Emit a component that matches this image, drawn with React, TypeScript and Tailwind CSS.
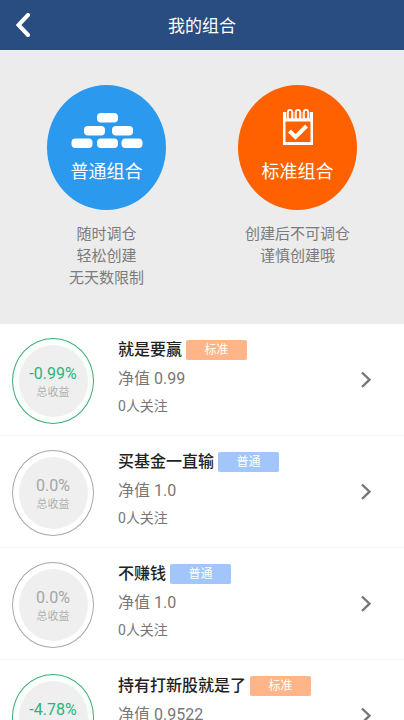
import { clsx } from 'clsx';

type Kind = 'standard' | 'normal';

interface Portfolio {
  name: string;
  kind: Kind;
  profit: string;
  netValue: string;
  followers: number;
}

const portfolios: Portfolio[] = [
  { name: '就是要赢', kind: 'standard', profit: '-0.99%', netValue: '0.99', followers: 0 },
  { name: '买基金一直输', kind: 'normal', profit: '0.0%', netValue: '1.0', followers: 0 },
  { name: '不赚钱', kind: 'normal', profit: '0.0%', netValue: '1.0', followers: 0 },
  { name: '持有打新股就是了', kind: 'standard', profit: '-4.78%', netValue: '0.9522', followers: 0 },
];

function BricksIcon() {
  return (
    <svg className="h-9 w-[72px]" viewBox="0 0 72 36" fill="white" aria-hidden="true">
      <rect x="26" y="0" width="21" height="9.5" rx="4" />
      <rect x="13" y="13" width="21" height="9.5" rx="4" />
      <rect x="41" y="13" width="21" height="9.5" rx="4" />
      <rect x="0.5" y="25.5" width="21" height="9.5" rx="4" />
      <rect x="26" y="25.5" width="21" height="9.5" rx="4" />
      <rect x="50.5" y="25.5" width="21" height="9.5" rx="4" />
    </svg>
  );
}

function CalendarIcon() {
  return (
    <svg className="h-9 w-[30px]" viewBox="0 0 30 36" fill="none" aria-hidden="true">
      <path d="M0 3h30v33H0z" fill="white" />
      <path d="M2.5 12.5h25v20.5h-25z" fill="#ff6000" />
      {/* Binding rings */}
      {[7, 15, 23].map((x) => (
        <g key={x}>
          <rect x={x - 3} y="0" width="6" height="11" rx="3" fill="white" />
          <rect x={x - 1.2} y="1.8" width="2.4" height="7.4" rx="1.2" fill="#ff6000" />
          <path d={`M${x - 3.4} 2v7.5M${x + 3.4} 2v7.5`} stroke="#ff6000" strokeWidth="0.7" />
        </g>
      ))}
      <path d="M6.5 22l6 6L23.5 17" stroke="white" strokeWidth="4" />
    </svg>
  );
}

interface CreateOptionProps {
  kind: Kind;
  label: string;
  lines: string[];
}

function CreateOption({ kind, label, lines }: CreateOptionProps) {
  return (
    <div className="flex flex-col items-center">
      <button
        type="button"
        className={clsx(
          'flex h-[125px] w-[119px] flex-col items-center rounded-[50%] text-lg leading-6 text-white',
          kind === 'normal' ? 'bg-[#2b99ed] pt-7' : 'bg-[#ff6000] pt-6'
        )}
      >
        {kind === 'normal' ? <BricksIcon /> : <CalendarIcon />}
        <span className={kind === 'normal' ? 'mt-[11px]' : 'mt-[15px]'}>{label}</span>
      </button>
      <p className="mt-[13px] text-center text-[15px] leading-[22px] text-[#7b7b7b]">
        {lines.map((line) => (
          <span key={line} className="block whitespace-nowrap">{line}</span>
        ))}
      </p>
    </div>
  );
}

function ProfitRing({ profit }: { profit: string }) {
  const down = profit.startsWith('-');

  return (
    <div
      className={clsx(
        'flex h-[86px] w-[82px] shrink-0 items-center justify-center rounded-[50%] border',
        down ? 'border-[#43ac78] bg-[#f9fffb]' : 'border-[#a8a8a8] bg-white'
      )}
    >
      <div className="flex h-[72px] w-[69px] flex-col items-center rounded-[50%] bg-[#efefef] pt-[19px]">
        <span className={clsx('text-base leading-5', down ? 'text-[#2bb37c]' : 'text-[#a5a5a5]')}>
          {profit}
        </span>
        <span className="text-[11px] leading-[18px] text-[#b0b0b0]">总收益</span>
      </div>
    </div>
  );
}

function PortfolioRow({ item }: { item: Portfolio }) {
  return (
    <li className="border-b border-[#f5f5f5]">
      <a href="#" className="flex h-[111px] items-start pr-8 pl-3">
        <div className="pt-3.5">
          <ProfitRing profit={item.profit} />
        </div>
        <div className="ml-6 min-w-0 flex-1 pt-3.5">
          <div className="flex items-center gap-1">
            <h2 className="text-base leading-6 font-medium whitespace-nowrap text-[#222]">{item.name}</h2>
            <span
              className={clsx(
                'h-5 w-[61px] shrink-0 rounded-xs text-center text-xs leading-5 text-white',
                item.kind === 'standard' ? 'bg-[#ffb587]' : 'bg-[#a2c6fc]'
              )}
            >
              {item.kind === 'standard' ? '标准' : '普通'}
            </span>
          </div>
          <p className="mt-[5px] text-base leading-6 text-[#777]">净值 {item.netValue}</p>
          <p className="mt-[3px] text-sm leading-6 text-[#777]">{item.followers}人关注</p>
        </div>
        <svg className="mt-[47px] h-[18px] w-3 shrink-0" viewBox="0 0 12 18" fill="none" aria-hidden="true">
          <path d="M2 1.5l7.5 7.2L2 16" stroke="#777" strokeWidth="2.4" />
        </svg>
      </a>
    </li>
  );
}

export default function App() {
  return (
    <div className="flex h-screen flex-col overflow-hidden bg-white font-['Roboto','Noto_Sans_CJK_SC',sans-serif]">
      <header className="grid h-[50px] shrink-0 grid-cols-[56px_1fr_56px] items-center bg-[#294d80] text-white">
        <button type="button" aria-label="返回" className="flex h-full items-center pl-4">
          <svg className="h-6 w-3.5" viewBox="0 0 14 24" fill="none" aria-hidden="true">
            <path d="M12 2L2.5 12L12 22" stroke="white" strokeWidth="4" strokeLinecap="round" />
          </svg>
        </button>
        <h1 className="pt-0.5 text-center text-[17px] leading-6">我的组合</h1>
      </header>

      <section className="grid h-[274px] shrink-0 grid-cols-2 bg-[#ececec] px-[11px] pt-[35px]">
        <CreateOption kind="normal" label="普通组合" lines={['随时调仓', '轻松创建', '无天数限制']} />
        <CreateOption kind="standard" label="标准组合" lines={['创建后不可调仓', '谨慎创建哦']} />
      </section>

      <ul className="min-h-0 flex-1 overflow-y-auto [scrollbar-width:none]">
        {portfolios.map((item) => (
          <PortfolioRow key={item.name} item={item} />
        ))}
      </ul>
    </div>
  );
}
